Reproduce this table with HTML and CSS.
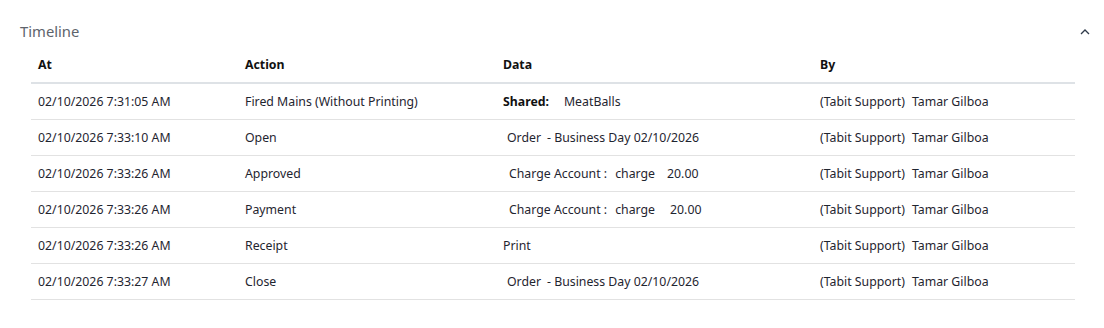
FILE: index.html
```html
<!DOCTYPE html>
<html lang="en">
<head>
    <meta charset="UTF-8">
    <title>Timeline</title>
    <link rel="stylesheet" href="styles.css">
</head>
<body>
    <div class="panel">
        <div class="panel-header">
            <h2>Timeline</h2>
            <svg class="chevron" width="12" height="8" viewBox="0 0 12 8">
                <path d="M2 6 L6 2 L10 6" fill="none" stroke="#2f3a4a" stroke-width="1.3"/>
            </svg>
        </div>

        <table class="timeline">
            <thead>
                <tr>
                    <th class="col-at">At</th>
                    <th class="col-action">Action</th>
                    <th class="col-data">Data</th>
                    <th>By</th>
                </tr>
            </thead>
            <tbody>
                <tr>
                    <td>02/10/2026 7:31:05 AM</td>
                    <td>Fired Mains (Without Printing)</td>
                    <td><b class="label">Shared:</b><span class="gap-l">MeatBalls</span></td>
                    <td>(Tabit Support)<span class="gap-s">Tamar Gilboa</span></td>
                </tr>
                <tr>
                    <td>02/10/2026 7:33:10 AM</td>
                    <td>Open</td>
                    <td><span class="indent">Order</span><span class="gap-o">- Business Day 02/10/2026</span></td>
                    <td>(Tabit Support)<span class="gap-s">Tamar Gilboa</span></td>
                </tr>
                <tr>
                    <td>02/10/2026 7:33:26 AM</td>
                    <td>Approved</td>
                    <td><span class="indent-2">Charge Account :</span><span class="gap-m">charge</span><span class="gap-a">20.00</span></td>
                    <td>(Tabit Support)<span class="gap-s">Tamar Gilboa</span></td>
                </tr>
                <tr>
                    <td>02/10/2026 7:33:26 AM</td>
                    <td>Payment</td>
                    <td><span class="indent-2">Charge Account :</span><span class="gap-m">charge</span><span class="gap-b">20.00</span></td>
                    <td>(Tabit Support)<span class="gap-s">Tamar Gilboa</span></td>
                </tr>
                <tr>
                    <td>02/10/2026 7:33:26 AM</td>
                    <td>Receipt</td>
                    <td>Print</td>
                    <td>(Tabit Support)<span class="gap-s">Tamar Gilboa</span></td>
                </tr>
                <tr>
                    <td>02/10/2026 7:33:27 AM</td>
                    <td>Close</td>
                    <td><span class="indent">Order</span><span class="gap-o">- Business Day 02/10/2026</span></td>
                    <td>(Tabit Support)<span class="gap-s">Tamar Gilboa</span></td>
                </tr>
            </tbody>
        </table>
    </div>
</body>
</html>
```

FILE: styles.css
```css
* {
    margin: 0;
    padding: 0;
    box-sizing: border-box;
}

body {
    font-family: "Source Sans Pro", "Noto Sans", sans-serif;
    background: #ffffff;
    color: #1f2530;
    font-size: 12.3px;
}

.panel {
    padding: 20px 29px 0 20px;
}

.panel-header {
    display: flex;
    align-items: center;
    justify-content: space-between;
    height: 22px;
    margin-bottom: 5px;
}

.panel-header h2 {
    font-size: 14.8px;
    font-weight: 400;
    color: #5e646c;
    line-height: 22px;
}

.chevron {
    margin-right: -16px;
    margin-top: 2px;
}

.timeline {
    width: calc(100% - 11px);
    margin-left: 11px;
    border-collapse: collapse;
    table-layout: fixed;
}

.timeline th,
.timeline td {
    text-align: left;
    padding: 0 7px;
    white-space: nowrap;
}

.timeline th {
    height: 36px;
    font-weight: 700;
    color: #111;
    border-bottom: 2px solid #dee2e6;
}

.timeline td {
    height: 36px;
    font-weight: 400;
    padding-top: 1px;
    border-bottom: 1px solid #e2e2e2;
}

.col-at { width: 207px; }
.col-action { width: 258px; }
.col-data { width: 317px; }

.label {
    font-weight: 700;
    color: #111;
}

.indent { margin-left: 4px; }
.indent-2 { margin-left: 6px; }
.gap-s { margin-left: 7px; }
.gap-o { margin-left: 6px; }
.gap-m { margin-left: 8px; }
.gap-l { margin-left: 15px; }
.gap-a { margin-left: 12px; }
.gap-b { margin-left: 15px; }
```
